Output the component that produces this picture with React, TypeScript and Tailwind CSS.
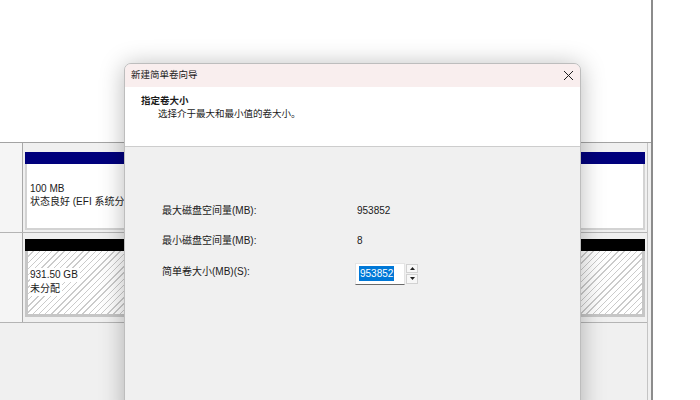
const FONT = "font-['Liberation_Sans','Noto_Sans_CJK_SC',sans-serif]";

function CloseIcon() {
  return (
    <svg width="11" height="11" viewBox="0 0 11 11" fill="none" stroke="#1f1f1f" strokeWidth="1">
      <path d="M1 1 L10 10 M10 1 L1 10" />
    </svg>
  );
}

function Arrow({ up }: { up?: boolean }) {
  return (
    <svg width="5" height="3" viewBox="0 0 5 3" fill="#1f1f1f">
      {up ? <path d="M0 3 L2.5 0 L5 3 Z" /> : <path d="M0 0 L5 0 L2.5 3 Z" />}
    </svg>
  );
}

function DiskRow({
  top,
  bar,
  children,
}: {
  top: string;
  bar: "blue" | "black";
  children: React.ReactNode;
}) {
  return (
    <div className="flex h-[90px] shrink-0 border-b border-[#b4b4b4]">
      <div className="w-[23px] shrink-0 border-r border-[#a8a8a8] bg-[#f5f5f5]" />
      <div className={`flex flex-1 flex-col px-[2px] ${top}`}>
        <div className={bar === "blue" ? "h-[12px] bg-[#00007c]" : "h-[12px] bg-black"} />
        {children}
      </div>
    </div>
  );
}

function Dialog() {
  return (
    <div className="absolute left-[124px] top-[63px] flex h-[360px] w-[457px] flex-col overflow-hidden rounded-t-[7px] border border-[#bdbdbd] bg-[#f0f0f0] text-[10px] text-[#1a1a1a] shadow-[0_2px_24px_rgba(0,0,0,0.28)]">
      <div className="flex h-[23px] shrink-0 items-center justify-between bg-[#f9eeee] pl-[6px] pr-[6px]">
        <span className="text-[9.5px]">新建简单卷向导</span>
        <CloseIcon />
      </div>
      <div className="h-[60px] shrink-0 border-b border-[#cdcdcd] bg-white pl-[16px] pt-[7px] leading-[13px]">
        <div className="text-[9.5px] font-bold">指定卷大小</div>
        <div className="pl-[17px] text-[9.5px]">选择介于最大和最小值的卷大小。</div>
      </div>
      <div className="flex flex-col pl-[37px] pt-[48px]">
        <div className="flex h-[30px] items-center">
          <span className="w-[195px]">最大磁盘空间量(MB):</span>
          <span>953852</span>
        </div>
        <div className="flex h-[30px] items-center">
          <span className="w-[195px]">最小磁盘空间量(MB):</span>
          <span>8</span>
        </div>
        <div className="mt-[1px] flex h-[30px] items-center">
          <span className="w-[195px]">简单卷大小(MB)(S):</span>
          <div className="-ml-[2px] mt-[5px] flex h-[22px]">
            <div className="flex w-[50px] items-center border border-[#e4e4e4] border-b-[#6a6a6a] bg-white pl-[3px]">
              <span className="bg-[#0078d7] px-[1px] leading-[15px] text-white">953852</span>
            </div>
            <div className="ml-[1px] flex w-[12px] flex-col gap-[1px] py-[1px]">
              <div className="flex flex-1 items-center justify-center border border-[#d2d2d2] bg-[#f7f7f7]">
                <Arrow up />
              </div>
              <div className="flex flex-1 items-center justify-center border border-[#d2d2d2] bg-[#f7f7f7]">
                <Arrow />
              </div>
            </div>
          </div>
        </div>
      </div>
    </div>
  );
}

export default function App() {
  return (
    <div className={`relative h-[400px] w-[700px] overflow-hidden bg-white text-[10px] text-[#1a1a1a] ${FONT}`}>
      <div className="flex h-full">
        <div className="flex w-[651px] shrink-0 flex-col">
          <div className="h-[143px] shrink-0 border-b border-[#a3a3a3] bg-white" />
          <div className="flex flex-1 flex-col bg-[#f0f0f0]">
            <div className="flex w-[648px] flex-1 flex-col border-r border-[#c4c4c4]">
              <DiskRow top="pt-[9px]" bar="blue">
                <div className="h-[66px] border-x-2 border-b-2 border-[#d3d3d3] bg-white pl-[3px] pt-[18px] leading-[13px]">
                  <div>100 MB</div>
                  <div className="whitespace-nowrap">状态良好 (EFI 系统分区)</div>
                </div>
              </DiskRow>
              <DiskRow top="pt-[6px]" bar="black">
                <div className="flex h-[66px] flex-col items-start border-x-[3px] border-b-[3px] border-[#c6c6c6] bg-[image:repeating-linear-gradient(135deg,#ffffff_0px,#ffffff_3.4px,#cbcbcb_3.4px,#cbcbcb_4.4px)] pl-[2px] pt-[17px] leading-[14px]">
                  <span className="bg-white pr-[2px]">931.50 GB</span>
                  <span className="bg-white pr-[2px]">未分配</span>
                </div>
              </DiskRow>
            </div>
          </div>
        </div>
        <div className="w-[2px] shrink-0 bg-[#8c8c8c]" />
        <div className="flex-1 bg-white" />
      </div>
      <Dialog />
    </div>
  );
}
